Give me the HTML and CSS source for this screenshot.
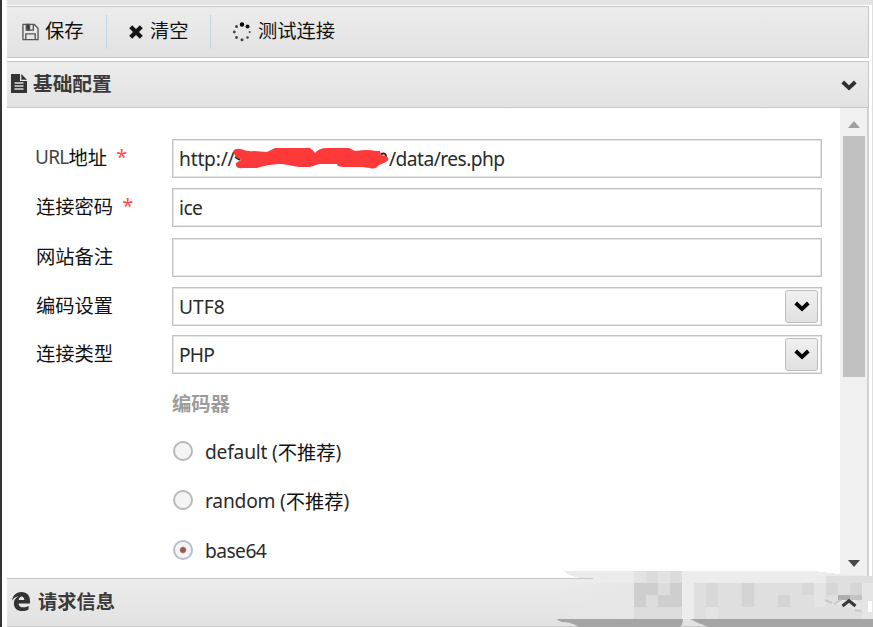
FILE: index.html
```
<!DOCTYPE html>
<html lang="zh-CN">
<head>
<meta charset="utf-8">
<title>基础配置</title>
<link rel="stylesheet" href="styles.css">
</head>
<body>
<div class="window">
  <div class="top-strip"></div>
  <div class="toolbar">
    <div class="tool save">
      <svg width="17" height="18" viewBox="0 0 18 18" fill="none" stroke="#555" stroke-width="1.4"><path d="M1 1H13L17 5V17H1Z"/><path d="M4.5 1V7H12V1M4 17V11H14V17"/><path d="M5 1H8V7H5Z" fill="#333"/></svg>
      <span>保存</span>
    </div>
    <div class="tool clear">
      <svg width="14" height="14" viewBox="0 0 14 14" fill="none" stroke="#151515" stroke-width="4.2"><path d="M1.7 1.7L12.3 12.3M12.3 1.7L1.7 12.3"/></svg>
      <span>清空</span>
    </div>
    <div class="tool test">
      <svg width="20" height="20" viewBox="0 0 20 20" fill="#444"><circle cx="10" cy="2.5" r="2.2" fill="#000"/><circle cx="15.5" cy="4.5" r="2" fill="#111"/><circle cx="17.7" cy="10" r="1"/><circle cx="15.5" cy="15.5" r="1.3"/><circle cx="10" cy="17.7" r="1.5"/><circle cx="4.5" cy="15.5" r="1.4"/><circle cx="2.3" cy="10" r="1.4"/><circle cx="4.5" cy="4.5" r="1.5"/></svg>
      <span>测试连接</span>
    </div>
  </div>
  <div class="header basic">
    <svg width="16" height="19" viewBox="0 0 16 19"><path d="M0 0H9V7H16V19H0ZM10.3 0L16 5.8H10.3Z" fill="#333"/><path d="M3.5 9H12.5M3.5 12H12.5M3.5 15H12.5" stroke="#ddd" stroke-width="1.3"/></svg>
    <span class="title">基础配置</span>
    <svg class="chevron" width="16" height="11" viewBox="0 0 16 11" fill="none" stroke="#303030" stroke-width="3.8"><path d="M1.7 2L8 8L14.3 2"/></svg>
  </div>
  <div class="body">
    <div class="form">
      <div class="label"><span class="url">URL</span>地址<b class="star">*</b></div>
      <div class="field lat">
        <span class="http">http://</span><svg class="scribble" width="156" height="24" viewBox="0 0 156 24"><path d="M2 9L7 12M148 6Q153 4 153 9" fill="none" stroke="#222" stroke-width="2"/><path d="M0 4Q1 0 8 1Q15 4 21 3L34 4L42 0H77Q81 3 82 5Q86 0 94 0H116L122 3Q137 1 142 3H147L148 7L153 8Q158 11 153 14L146 17Q142 22 137 20L129 19H111Q104 19 104 16H86L77 19H66L49 16Q36 16 24 20H10Q2 21 3 15L8 12L3 9Z" fill="#fe3939"/></svg><span class="path">/data/res.php</span>
      </div>
      <div class="label">连接密码<b class="star">*</b></div>
      <div class="field lat">ice</div>
      <div class="label">网站备注</div>
      <div class="field"></div>
      <div class="label">编码设置</div>
      <div class="field lat"><span class="utf">UTF8</span>
        <span class="drop"><svg width="16" height="11" viewBox="0 0 16 11" fill="none" stroke="#080808" stroke-width="3.8"><path d="M1.7 2L8 8L14.3 2"/></svg></span></div>
      <div class="label">连接类型</div>
      <div class="field lat"><span class="caps">PHP</span>
        <span class="drop"><svg width="16" height="11" viewBox="0 0 16 11" fill="none" stroke="#080808" stroke-width="3.8"><path d="M1.7 2L8 8L14.3 2"/></svg></span></div>
      <div class="encoders">
        <div class="group">编码器</div>
        <div class="option"><i class="radio"></i><span class="lat word">default (</span>不推荐<span class="lat">)</span></div>
        <div class="option"><i class="radio"></i><span class="lat word">random (</span>不推荐<span class="lat">)</span></div>
        <div class="option"><i class="radio on"></i><span class="lat">base64</span></div>
      </div>
    </div>
    <div class="scroll">
      <svg class="up" width="12" height="7" viewBox="0 0 12 7"><path d="M0 7L6 0L12 7Z" fill="#a0a0a0"/></svg>
      <div class="thumb"></div>
      <svg class="down" width="12" height="7" viewBox="0 0 12 7"><path d="M0 0L6 7L12 0Z" fill="#484848"/></svg>
    </div>
  </div>
  <div class="header request">
    <svg width="18" height="19" viewBox="0 0 19 20"><path d="M0 9C1 3 5 0 10 0C16 0 19 4 19 9V12H7C7 17 14 17 17.5 14.5V18.5C11 22 2 20 2 12C2 8 4 6 7 4.5C4 5 2 6 0 9ZM7 8.5H13C13 3.5 7.5 3.5 7 8.5Z" fill="#333"/></svg>
    <span class="title">请求信息</span>
  </div>
</div>
<svg class="mosaic" width="323" height="59" viewBox="550 568 323 59" shape-rendering="crispEdges">
  <defs><linearGradient id="fade"><stop offset="0" stop-color="#e7e7e7" stop-opacity="0"/><stop offset="1" stop-color="#e7e7e7"/></linearGradient></defs>
  <path d="M565 571H813L838 574L873 576V619H634V583H613Q603 578 581 578Q567 576 565 571Z" fill="#ebebeb"/>
  <path d="M550 583H634V619H550Z" fill="url(#fade)"/>
  <path d="M634 571H646V583H634ZM658 571H670V583H658Z" fill="#e3e3e3"/>
  <path d="M646 571H658V583H646ZM670 571H682V583H670Z" fill="#dcdcdc"/>
  <path d="M682 571H814L838 574V583H682Z" fill="#ececec"/>
  <path d="M634 583H658V595H646V607H634ZM670 583H682V607H658V595H670Z" fill="#cecece"/>
  <path d="M658 583H670V595H658ZM646 595H658V607H646ZM634 607H682V619H634Z" fill="#dcdcdc"/>
  <path d="M682 571H694V619H682Z" fill="#ececec"/>
  <path d="M694 583H862V619H694Z" fill="#dfdfdf"/>
  <path d="M706 583H718V607H706ZM742 583H754V595H742ZM802 583H814V595H802Z" fill="#d8d8d8"/>
  <path d="M742 583H754V607H742ZM778 595H790V607H778Z" fill="#d4d4d4"/>
  <path d="M706 607H718V619H706ZM814 583H826V607H814Z" fill="#e4e4e4"/>
  <path d="M826 583H838V595H826ZM850 583H862V595H850Z" fill="#d6d6d6"/>
  <path d="M826 576H873V583H826Z" fill="#dedede"/>
  <path d="M862 583H873V619H862Z" fill="#e5e5e5"/>
  <path d="M838 595H850V600H838Z" fill="#adadad"/>
  <path d="M850 595H862V600H850Z" fill="#c3c3c3"/>
  <path d="M868 601H872V612H868Z" fill="#fff"/>
  <path d="M557 619H683Q683 624 680 627H579Q571 622 562 622Q558 621 557 619ZM690 619H873V627H708Q702 624 698 623Z" fill="#a5a5a5" shape-rendering="auto"/>
  <path d="M832 603L842 600H857L861 604V611L846 607Z" fill="#e7e7e7" shape-rendering="auto"/>
  <path d="M825 600L832 603M834 604L841 600M855 610L861 611" stroke="#c8c8c8" stroke-width="2" shape-rendering="auto"/>
  <path d="M842.5 606L849 600.8L855.5 606" fill="none" stroke="#3a3a3a" stroke-width="3.3" shape-rendering="auto"/>
</svg>
</body>
</html>
```

FILE: styles.css
```
* { box-sizing: border-box; }
body {
  margin: 0;
  height: 627px;
  overflow: hidden;
  background: #fff;
  color: #111;
  font: 19.3px/28px "Noto Sans CJK SC", sans-serif;
}
svg { display: block; flex: none; }
.window {
  height: 627px;
  border-left: 2px solid #353535;
  border-right: 1px solid #dfdfdf;
  padding: 0 3px 0 5px;
  display: flex;
  flex-direction: column;
}
.top-strip { height: 5px; margin-right: -3px; background: #e4e4e4; flex: none; }
.toolbar {
  height: 52px;
  margin-top: 1px;
  flex: none;
  display: flex;
  align-items: center;
  border: 1px solid #c6c6c6;
  border-left: 0;
  background: linear-gradient(#ececec, #e2e2e2);
}
.tool { height: 34px; display: flex; align-items: center; white-space: nowrap; }
.tool span { position: relative; top: -2px; }
.save { width: 100px; padding-left: 15px; gap: 6px; border-right: 1px solid #c2d7df; }
.clear { width: 104px; padding-left: 22px; gap: 7px; border-right: 1px solid #c2d7df; }
.test { padding-left: 21px; gap: 6px; }
.header {
  flex: none;
  display: flex;
  align-items: center;
  border: 1px solid #c6c6c6;
  border-left: 0;
  background: linear-gradient(#ececec, #e2e2e2);
  color: #3a3a3a;
}
.title { font-weight: 700; position: relative; top: -2px; }
.basic { height: 47px; margin-top: 3px; padding: 0 11px 0 4px; }
.basic svg:first-child { margin-top: -2px; }
.basic .title { margin-left: 6px; font-size: 19.7px; }
.chevron { margin-left: auto; position: relative; top: 1px; }
.request { height: 49px; padding-left: 5px; }
.request svg { margin-top: -2px; }
.request .title { margin-left: 8px; }
.body { height: 470px; flex: none; display: flex; border-right: 2px solid #d2d2d2; overflow: hidden; }
.form {
  flex: none;
  width: 833px;
  padding: 31px 18px 0 29px;
  display: grid;
  grid-template-columns: 136px 650px;
  grid-template-rows: 49px 50px 49px 48px 39px auto;
}
.label { height: 35px; display: flex; align-items: center; white-space: pre; }
.url, .lat { font-family: "Noto Sans", "Noto Sans CJK SC", sans-serif; letter-spacing: -0.55px; }
.url { font-size: 19px; letter-spacing: -0.7px; margin-left: -1px; color: #444; }
.lat { color: #2a2a2a; font-size: 19.2px; }
.star { margin-left: 9px; color: #ff4b4b; font: 20px/28px "Noto Sans", sans-serif; }
.field {
  height: 39px;
  border: 1px solid #c2c2c2;
  box-shadow: inset 0 0 0 1px #e4e4e4;
  padding: 1px 3px 0 6px;
  display: flex;
  align-items: center;
  background: #fff;
}
.http { width: 54px; white-space: nowrap; letter-spacing: -0.2px; }
.scribble { position: relative; top: 1px; }
.caps { letter-spacing: -0.8px; }
.utf { letter-spacing: 0; }
.drop {
  margin: -1px 0 0 auto;
  width: 33px;
  height: 33px;
  display: grid;
  place-items: center;
  border: 1px solid #bcbcbc;
  border-radius: 3px;
  background: linear-gradient(#f0f0f0, #e1e1e1);
}
.encoders { grid-column: 2; }
.group { height: 53px; padding-top: 15px; color: #9c9c9c; font-weight: 700; }
.option { height: 49.5px; display: flex; align-items: center; white-space: pre; }
.word { letter-spacing: -0.2px; }
.radio {
  width: 20px;
  height: 20px;
  margin: -2px 12px 0 1px;
  border: 2px solid #bdb7b7;
  border-radius: 50%;
  background: #f4f4f4;
}
.on { border-color: #b7bec8; background: radial-gradient(circle, #9c5550 0 2.4px, #f5f5f5 3.8px); }
.scroll { width: 27px; padding: 13px 2px 0 3px; background: #f0f0f0; flex: none; }
.up { margin-left: 5px; }
.thumb { width: 22px; height: 241px; margin-top: 8px; background: #c1c1c1; }
.down { margin: 183px 0 0 5px; }
.mosaic { position: absolute; left: 550px; top: 568px; }
```
